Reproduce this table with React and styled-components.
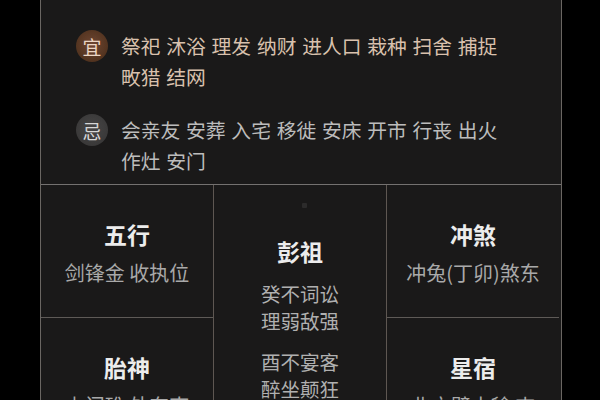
import React from "react";
import styled, { createGlobalStyle } from "styled-components";

const GlobalStyle = createGlobalStyle`
  html, body {
    margin: 0;
    padding: 0;
    background: #000;
  }
  body {
    font-family: "Noto Sans CJK SC", "Noto Sans", sans-serif;
    overflow: hidden;
  }
`;

const Panel = styled.div`
  width: 520px;
  height: 400px;
  margin: 0 40px;
  background: #1a1919;
  border-left: 1px solid #6a6662;
  border-right: 1px solid #6a6662;
  overflow: hidden;
`;

const Advice = styled.div`
  height: 185px;
  box-sizing: border-box;
  padding: 30px 20px 0 35px;
  border-bottom: 1px solid #747170;
  display: flex;
  flex-direction: column;
  gap: 22px;
`;

const AdviceRow = styled.div`
  display: flex;
  align-items: flex-start;
  gap: 13px;
`;

const Badge = styled.div`
  flex: none;
  width: 32px;
  height: 32px;
  border-radius: 50%;
  display: flex;
  align-items: center;
  justify-content: center;
  font-size: 19px;
  line-height: 1;
  background: ${(p) =>
    p.$good
      ? "radial-gradient(circle at 50% 45%, #6e4632 0%, #52331f 70%, #402819 100%)"
      : "radial-gradient(circle at 50% 45%, #474646 0%, #383737 80%)"};
  color: ${(p) => (p.$good ? "#ecd6c4" : "#d6d6d6")};
`;

const AdviceText = styled.div`
  font-size: 19.8px;
  line-height: 31px;
  word-spacing: 1.3px;
  color: ${(p) => (p.$good ? "#d9c1ad" : "#bcbcbc")};
`;

const Grid = styled.div`
  display: grid;
  grid-template-columns: 172px 174px 172px;
  grid-template-rows: 132px 133px;
`;

const Cell = styled.div`
  display: flex;
  flex-direction: column;
  align-items: center;
  justify-content: center;
  gap: 11px;
  padding-top: 2px;
  box-sizing: border-box;
  border-top: ${(p) => (p.$lower ? "1px solid #5e5a57" : "none")};
`;

const CenterCell = styled.div`
  grid-column: 2;
  grid-row: 1 / span 2;
  border-left: 1px solid #5e5752;
  border-right: 1px solid #5e5752;
  display: flex;
  flex-direction: column;
  align-items: center;
  padding-top: 18px;
`;

const Dot = styled.div`
  width: 5px;
  height: 5px;
  border-radius: 1px;
  background: #2c2b2b;
  margin-left: 8px;
  margin-bottom: 28px;
`;

const Title = styled.div`
  font-size: 23px;
  line-height: 30px;
  font-weight: 700;
  color: #ececec;
`;

const Sub = styled.div`
  font-size: 20px;
  line-height: 26px;
  color: #a9a9a9;
  white-space: nowrap;
`;

const Verse = styled.div`
  font-size: 19.5px;
  line-height: 27px;
  color: #b0b0b0;
  text-align: center;
  margin-top: 14px;
`;

export default function App() {
  return (
    <>
      <GlobalStyle />
      <Panel>
        <Advice>
          <AdviceRow>
            <Badge $good>宜</Badge>
            <AdviceText $good>
              祭祀 沐浴 理发 纳财 进人口 栽种 扫舍 捕捉
              <br />
              畋猎 结网
            </AdviceText>
          </AdviceRow>
          <AdviceRow>
            <Badge>忌</Badge>
            <AdviceText>
              会亲友 安葬 入宅 移徙 安床 开市 行丧 出火
              <br />
              作灶 安门
            </AdviceText>
          </AdviceRow>
        </Advice>
        <Grid>
          <Cell>
            <Title>五行</Title>
            <Sub>剑锋金 收执位</Sub>
          </Cell>
          <CenterCell>
            <Dot />
            <Title>彭祖</Title>
            <Verse>
              癸不词讼
              <br />
              理弱敌强
            </Verse>
            <Verse>
              酉不宴客
              <br />
              醉坐颠狂
            </Verse>
          </CenterCell>
          <Cell>
            <Title>冲煞</Title>
            <Sub>冲兔(丁卯)煞东</Sub>
          </Cell>
          <Cell $lower>
            <Title>胎神</Title>
            <Sub>占门碓 外东南</Sub>
          </Cell>
          <Cell $lower>
            <Title>星宿</Title>
            <Sub>北方壁水貐 吉</Sub>
          </Cell>
        </Grid>
      </Panel>
    </>
  );
}
